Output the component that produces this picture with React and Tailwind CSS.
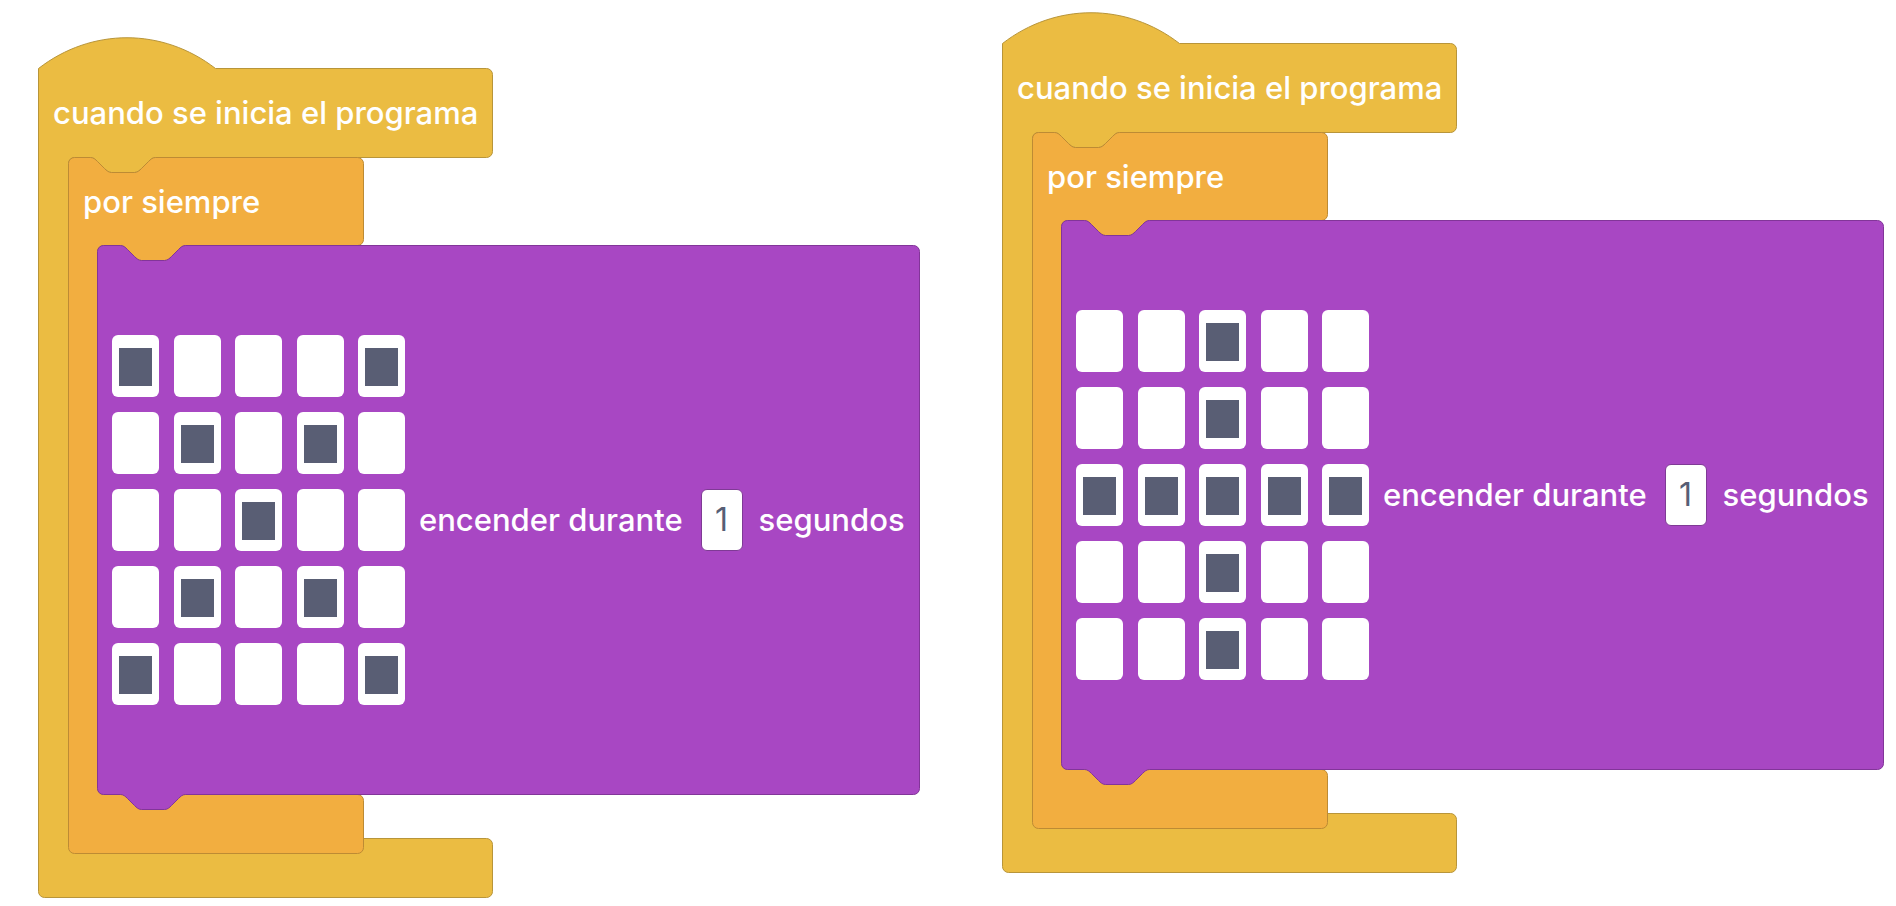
import React from 'react';

const notchDown = 'c 3,0 5,2 7,4 l 7,7 c 2,2 4,4 7,4 h 23 c 3,0 5,-2 7,-4 l 7,-7 c 2,-2 4,-4 7,-4';
const tabBack = 'c -3,0 -5,2 -7,4 l -7,7 c -2,2 -4,4 -7,4 h -23 c -3,0 -5,-2 -7,-4 l -7,-7 c -2,-2 -4,-4 -7,-4';

const yellowPath = `M 1,32 c 53,-41 124,-41 177,0 H 449 a 6,6 0 0 1 6,6 V 115 a 6,6 0 0 1 -6,6 H 118 ${tabBack} H 37 a 6,6 0 0 0 -6,6 V 796 a 6,6 0 0 0 6,6 H 449 a 6,6 0 0 1 6,6 V 855 a 6,6 0 0 1 -6,6 H 7 a 6,6 0 0 1 -6,-6 Z`;

const orangePath = `M 31,127 a 6,6 0 0 1 6,-6 H 53 ${notchDown} H 320 a 6,6 0 0 1 6,6 V 203 a 6,6 0 0 1 -6,6 H 148 ${tabBack} H 66 a 6,6 0 0 0 -6,6 V 752 a 6,6 0 0 0 6,6 H 320 a 6,6 0 0 1 6,6 V 811 a 6,6 0 0 1 -6,6 H 37 a 6,6 0 0 1 -6,-6 Z`;

const purplePath = `M 60,215 a 6,6 0 0 1 6,-6 H 83 ${notchDown} H 876 a 6,6 0 0 1 6,6 V 752 a 6,6 0 0 1 -6,6 H 148 ${tabBack} H 66 a 6,6 0 0 1 -6,-6 Z`;

const X_PATTERN = [
  [1, 0, 0, 0, 1],
  [0, 1, 0, 1, 0],
  [0, 0, 1, 0, 0],
  [0, 1, 0, 1, 0],
  [1, 0, 0, 0, 1],
];

const PLUS_PATTERN = [
  [0, 0, 1, 0, 0],
  [0, 0, 1, 0, 0],
  [1, 1, 1, 1, 1],
  [0, 0, 1, 0, 0],
  [0, 0, 1, 0, 0],
];

function Led({ on }) {
  return (
    <div className="w-[47px] h-[62px] rounded-[6px] bg-white pl-[7px] pt-[13px]">
      {on ? <div className="w-[33px] h-[38px] bg-[#595e74]" /> : null}
    </div>
  );
}

function BlockStack({ pattern, className }) {
  return (
    <div className={`relative w-[884px] h-[862px] shrink-0 ${className}`}>
      {/* block outlines */}
      <svg className="absolute inset-0" width="884" height="862" viewBox="0 0 884 862">
        <g transform="translate(0.5,0.5)">
          <path d={yellowPath} fill="#ebbc42" stroke="#b8953a" strokeWidth="1" />
          <path d={orangePath} fill="#f2ae40" stroke="#bd8b34" strokeWidth="1" />
          <path d={purplePath} fill="#a847c3" stroke="#823599" strokeWidth="1" />
        </g>
      </svg>

      <div className="relative flex flex-col text-white text-[31px] font-medium leading-none">
        <div className="mt-[32px] h-[89px] pl-[16px] flex items-center">cuando se inicia el programa</div>
        <div className="h-[88px] pl-[46px] flex items-center">por siempre</div>
        <div className="h-[549px] pl-[75px] flex items-center">
          <div className="grid grid-cols-5 gap-x-[14.5px] gap-y-[15px]">
            {pattern.flat().map((v, i) => (
              <Led key={i} on={v === 1} />
            ))}
          </div>
          <span className="ml-[14px]">encender durante</span>
          <div className="ml-[18px] w-[42px] h-[62px] rounded-[6px] bg-white border border-[#7f3a95] flex items-center justify-center text-[#575e75] font-normal text-[32px]">
            1
          </div>
          <span className="ml-[16px]">segundos</span>
        </div>
      </div>
    </div>
  );
}

export default function App() {
  return (
    <div className="w-[1896px] h-[906px] bg-white overflow-hidden flex items-start font-['Inter',sans-serif] antialiased">
      <BlockStack pattern={X_PATTERN} className="ml-[37px] mt-[36px]" />
      <BlockStack pattern={PLUS_PATTERN} className="ml-[80px] mt-[11px]" />
    </div>
  );
}
